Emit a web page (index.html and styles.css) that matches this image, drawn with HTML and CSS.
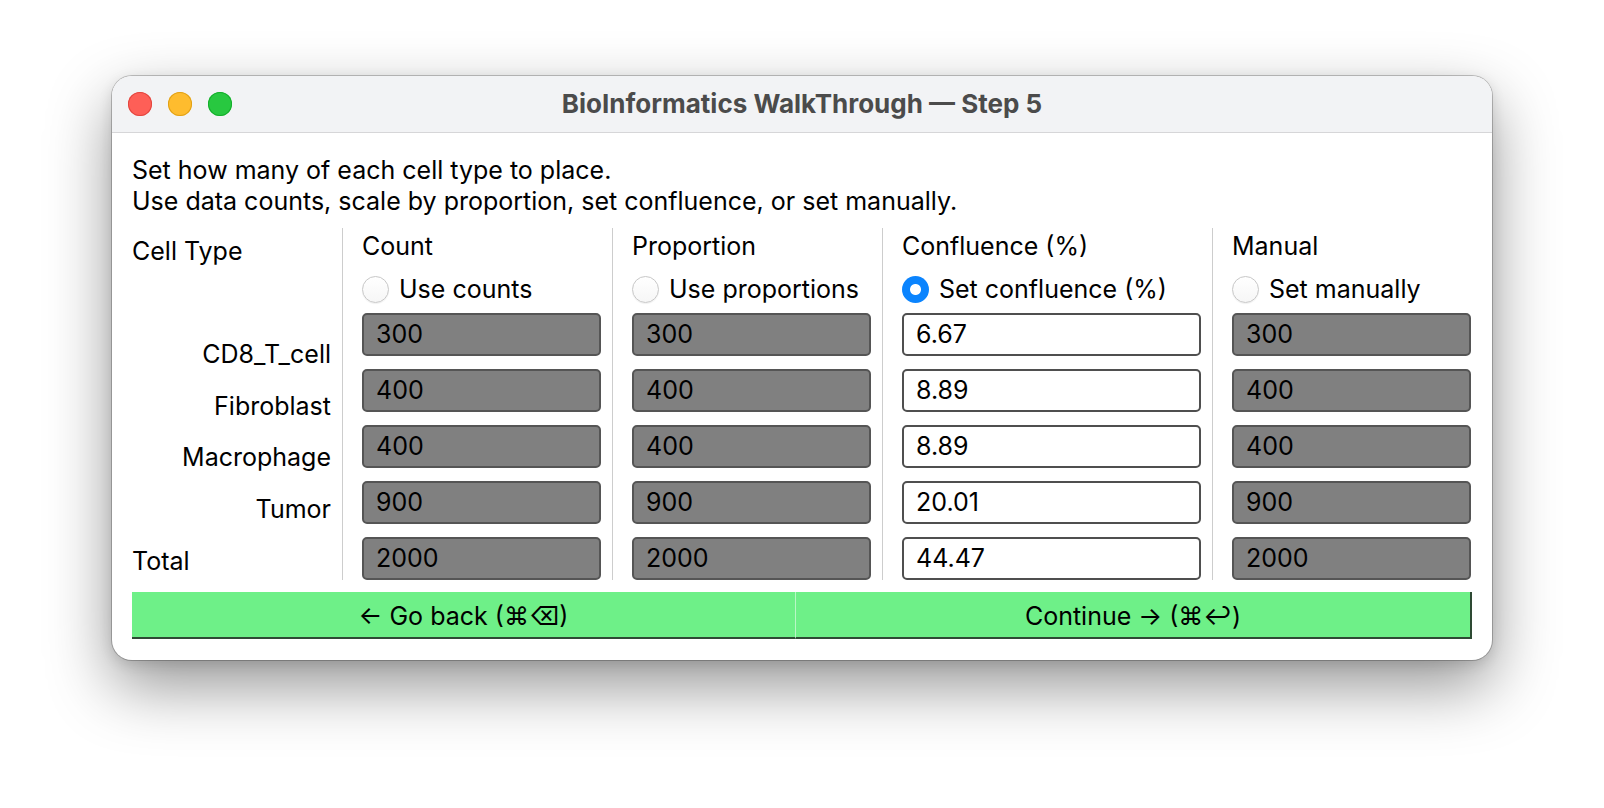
FILE: index.html
```html
<!DOCTYPE html>
<html lang="en">
<head>
<meta charset="utf-8">
<title>BioInformatics WalkThrough — Step 5</title>
<link rel="stylesheet" href="styles.css">
</head>
<body>
<div class="desk">
  <div class="window">
    <div class="titlebar">
      <div class="lights">
        <span class="light light-close"></span>
        <span class="light light-min"></span>
        <span class="light light-zoom"></span>
      </div>
      <div class="title">BioInformatics WalkThrough — Step 5</div>
      <div class="titlebar-spacer"></div>
    </div>

    <div class="content">
      <p class="intro">Set how many of each cell type to place.<br>Use data counts, scale by proportion, set confluence, or set manually.</p>

      <div class="table">
        <div class="labels">
          <div class="label label-head">Cell Type</div>
          <div class="label"></div>
          <div class="label label-row">CD8_T_cell</div>
          <div class="label label-row">Fibroblast</div>
          <div class="label label-row">Macrophage</div>
          <div class="label label-row">Tumor</div>
          <div class="label label-head">Total</div>
        </div>

        <div class="col">
          <div class="col-head">Count</div>
          <label class="choice"><span class="radio"></span>Use counts</label>
          <input class="field field-off" type="text" value="300" readonly>
          <input class="field field-off" type="text" value="400" readonly>
          <input class="field field-off" type="text" value="400" readonly>
          <input class="field field-off" type="text" value="900" readonly>
          <input class="field field-off" type="text" value="2000" readonly>
        </div>

        <div class="col">
          <div class="col-head">Proportion</div>
          <label class="choice"><span class="radio"></span>Use proportions</label>
          <input class="field field-off" type="text" value="300" readonly>
          <input class="field field-off" type="text" value="400" readonly>
          <input class="field field-off" type="text" value="400" readonly>
          <input class="field field-off" type="text" value="900" readonly>
          <input class="field field-off" type="text" value="2000" readonly>
        </div>

        <div class="col col-wide">
          <div class="col-head">Confluence (%)</div>
          <label class="choice"><span class="radio radio-on"></span>Set confluence (%)</label>
          <input class="field" type="text" value="6.67">
          <input class="field" type="text" value="8.89">
          <input class="field" type="text" value="8.89">
          <input class="field" type="text" value="20.01">
          <input class="field" type="text" value="44.47">
        </div>

        <div class="col">
          <div class="col-head">Manual</div>
          <label class="choice"><span class="radio"></span>Set manually</label>
          <input class="field field-off" type="text" value="300" readonly>
          <input class="field field-off" type="text" value="400" readonly>
          <input class="field field-off" type="text" value="400" readonly>
          <input class="field field-off" type="text" value="900" readonly>
          <input class="field field-off" type="text" value="2000" readonly>
        </div>
      </div>

      <div class="actions">
        <button class="btn btn-back" type="button">← Go back (⌘⌫)</button>
        <button class="btn btn-next" type="button">Continue → (⌘↩)</button>
      </div>
    </div>
  </div>
</div>
</body>
</html>
```

FILE: styles.css
```css
* {
  box-sizing: border-box;
}

html, body {
  margin: 0;
  padding: 0;
  background: #ffffff;
}

body {
  font-family: Inter, "Noto Sans", "DejaVu Sans", sans-serif;
  font-size: 25px;
  line-height: 31px;
  color: #000;
}

.desk {
  width: 1604px;
  height: 808px;
  padding: 76px 0 0 112px;
}

/* window chrome */
.window {
  width: 1380px;
  background: #ffffff;
  border-radius: 20px;
  overflow: hidden;
  box-shadow:
    0 0 0 1px rgba(0, 0, 0, 0.22),
    0 26px 64px rgba(0, 0, 0, 0.42),
    0 4px 14px rgba(0, 0, 0, 0.12);
}

.titlebar {
  height: 57px;
  background: #f2f3f5;
  border-bottom: 1px solid #d6d6d8;
  display: grid;
  grid-template-columns: 1fr auto 1fr;
  align-items: center;
}

.lights {
  display: flex;
  gap: 16px;
  padding-left: 16px;
}

.light {
  width: 24px;
  height: 24px;
  border-radius: 50%;
}

.light-close {
  background: #fe5f57;
  box-shadow: inset 0 0 0 1px #e2463f;
}

.light-min {
  background: #febc2e;
  box-shadow: inset 0 0 0 1px #e1a116;
}

.light-zoom {
  background: #28c840;
  box-shadow: inset 0 0 0 1px #14ae2b;
}

.title {
  font-size: 26px;
  font-weight: 700;
  color: #4b4b4b;
  margin-top: -2px;
}

/* body */
.content {
  padding: 22px 20px 21px 20px;
}

.intro {
  margin: 0 0 6px 0;
}

.table {
  display: flex;
  align-items: flex-start;
}

.labels {
  width: 199px;
  padding-top: 3px;
  display: flex;
  flex-direction: column;
}

.label {
  height: 51.6px;
  line-height: 51.6px;
  white-space: nowrap;
}

.label-row {
  text-align: right;
}

.col {
  margin-left: 11px;
  margin-top: 5px;
  padding-top: 3px;
  padding-left: 19px;
  border-left: 1px solid #cdcdcd;
  width: 259px;
  display: flex;
  flex-direction: column;
  gap: 13px;
}

.col-wide {
  width: 319px;
}

.col-head {
  height: 31px;
  margin-bottom: -1px;
}

.choice {
  display: flex;
  align-items: center;
  gap: 10px;
  height: 31px;
  margin-bottom: -5px;
  white-space: nowrap;
}

.radio {
  width: 27px;
  height: 27px;
  border-radius: 50%;
  flex: none;
  background: linear-gradient(#ffffff, #f6f6f6);
  border: 1px solid #c7c7c7;
  box-shadow: 0 1px 1px rgba(0, 0, 0, 0.06);
}

.radio-on {
  border: none;
  background: radial-gradient(circle, #ffffff 0 5px, #0b84fe 6px);
  box-shadow: none;
}

.field {
  display: block;
  width: 100%;
  height: 43px;
  margin: 0;
  padding: 3px 12px 5px 12px;
  font: inherit;
  line-height: 31px;
  color: #000;
  background: #ffffff;
  border: 2px solid #4f4f4f;
  border-radius: 5px;
  outline: none;
}

.field-off {
  background: #808080;
  border-color: #555555;
}

/* footer buttons */
.actions {
  margin-top: 5px;
  display: flex;
}

.btn {
  height: 47px;
  margin: 0;
  padding: 4px 0 0 0;
  font: inherit;
  line-height: 31px;
  color: #000;
  background: #6ef088;
  border: none;
  border-bottom: 2px solid #2e4a34;
  border-radius: 0;
}

.btn-back {
  width: 664px;
  border-right: 1px solid #b9f7c6;
}

.btn-next {
  flex: 1;
  border-right: 2px solid #2e4a34;
}
```
